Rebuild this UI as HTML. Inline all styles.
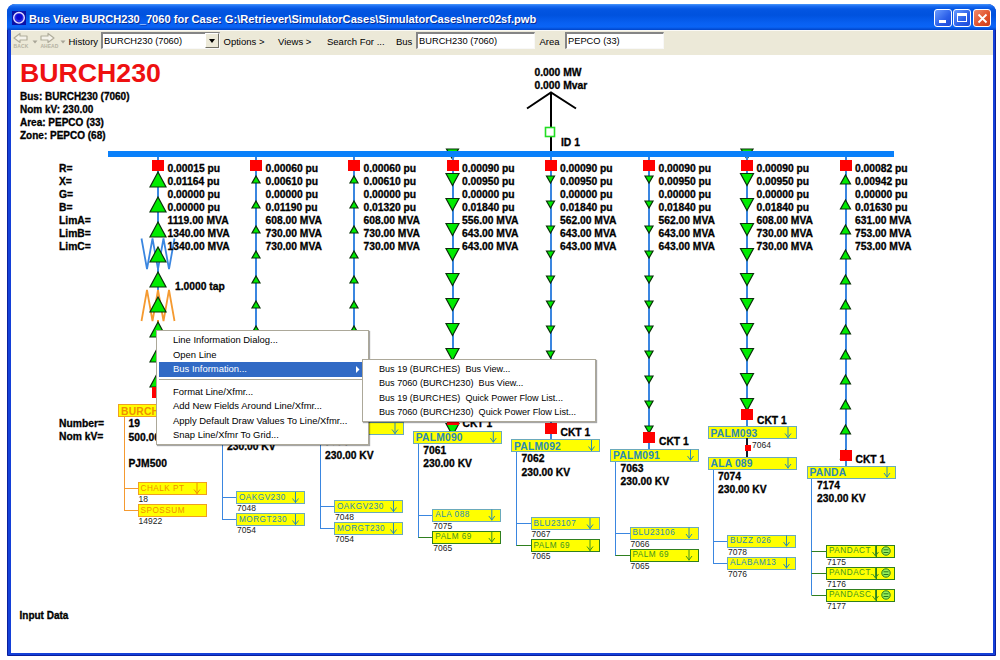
<!DOCTYPE html>
<html><head><meta charset="utf-8"><style>
html,body{margin:0;padding:0;}
body{width:1000px;height:660px;position:relative;overflow:hidden;background:#fff;font-family:'Liberation Sans', sans-serif;}
.abs{position:absolute;}
#frame{left:7px;top:4px;width:989px;height:652px;background:#1440d8;border:1px solid #0a1e9c;box-sizing:border-box;border-radius:8px 8px 0 0;}
#title{left:7px;top:4px;width:989px;height:26px;border-radius:8px 8px 0 0;
 background:linear-gradient(to bottom,#4a98fa 0px,#1a6cf2 2px,#0456e2 5px,#0052de 11px,#0860f2 19px,#0a64f6 23px,#0044c8 26px);}
#ttext{left:29px;top:13px;color:#fff;font-weight:bold;font-size:11.1px;white-space:pre;text-shadow:1px 1px 0 #0a2a90;}
#toolbar{left:11px;top:30px;width:982px;height:25px;background:#ece9d8;border-top:1px solid #fbfaf6;box-sizing:border-box;}
#content{left:11px;top:55px;width:982px;height:598px;background:#fff;}
.tb{font-size:9.5px;color:#000;white-space:pre;top:36px;}
.inp{background:#fff;border-top:2px solid #858585;border-left:2px solid #858585;border-right:1px solid #f8f8f8;border-bottom:1px solid #f8f8f8;box-sizing:border-box;font-size:9.3px;line-height:14px;padding-left:1px;white-space:pre;}
.btn{width:18px;height:18px;border-radius:3px;box-sizing:border-box;border:1px solid #fff;}
.menu{background:#fff;border:1px solid #aca899;box-shadow:1px 1px 1px rgba(0,0,0,0.35);box-sizing:border-box;}
.mi{position:absolute;left:0;font-size:9.45px;white-space:pre;color:#000;}
</style></head><body>
<div id="frame" class="abs"></div>
<div id="title" class="abs"></div>
<svg class="abs" style="left:12px;top:11px" width="14" height="14"><rect width="14" height="14" fill="#0a12a8"/><circle cx="7" cy="6.8" r="5.3" fill="#2a2ae0" stroke="#e6e0ff" stroke-width="1.4"/><circle cx="7.2" cy="6" r="3" fill="#0a0ad0"/></svg>

<div id="ttext" class="abs">Bus View BURCH230_7060 for Case: G:\Retriever\SimulatorCases\SimulatorCases\nerc02sf.pwb</div>
<div class="abs btn" style="left:934px;top:9px;background:linear-gradient(135deg,#6a9cff,#2a5ee8 60%,#1c4ad8);"><div class="abs" style="left:4px;top:10px;width:7px;height:3px;background:#fff"></div></div>
<div class="abs btn" style="left:953px;top:9px;background:linear-gradient(135deg,#6a9cff,#2a5ee8 60%,#1c4ad8);"><div class="abs" style="left:3px;top:3px;width:10px;height:9px;border:1px solid #fff;border-top-width:3px;box-sizing:border-box;"></div></div>
<div class="abs btn" style="left:973px;top:9px;background:linear-gradient(135deg,#f08a6a,#e0502a 60%,#c83c1a);">
<svg class="abs" style="left:3px;top:3px" width="11" height="11"><path d="M1.5,1.5 L9.5,9.5 M9.5,1.5 L1.5,9.5" stroke="#fff" stroke-width="1.8"/></svg></div>
<div id="toolbar" class="abs"></div>
<div id="content" class="abs"></div>
<!-- toolbar -->
<svg class="abs" style="left:10px;top:32px" width="60" height="20">
 <path d="M4,6 L10,1.5 V4 H17 V8 H10 V10.5 Z" fill="#f4f2ea" stroke="#b0ad9c" stroke-width="1.2" stroke-linejoin="round"/>
 <text x="3.5" y="15.5" font-size="5" fill="#b5b2a2" font-family="Liberation Sans" font-weight="bold" letter-spacing="0.1">BACK</text>
 <path d="M22.5,8.5 h5 l-2.5,3 z" fill="#a8a597"/>
 <path d="M44,6 L38,1.5 V4 H31 V8 H38 V10.5 Z" fill="#f4f2ea" stroke="#b0ad9c" stroke-width="1.2" stroke-linejoin="round"/>
 <text x="30.5" y="15.5" font-size="5" fill="#b5b2a2" font-family="Liberation Sans" font-weight="bold" letter-spacing="0">AHEAD</text>
 <path d="M50.5,8.5 h5 l-2.5,3 z" fill="#a8a597"/>
</svg>
<div class="abs tb" style="left:68.5px">History</div>
<div class="abs inp" style="left:101px;top:32px;width:119px;height:17px;">BURCH230 (7060)</div>
<div class="abs" style="left:205px;top:33px;width:14px;height:15px;background:#ece9d8;border-left:1px solid #fff;border-top:1px solid #fff;border-right:1px solid #716f64;border-bottom:1px solid #716f64;box-sizing:border-box;"><div class="abs" style="left:3px;top:5px;width:0;height:0;border-left:3.5px solid transparent;border-right:3.5px solid transparent;border-top:4px solid #000;"></div></div>
<div class="abs tb" style="left:223.5px">Options &gt;</div>
<div class="abs tb" style="left:278px">Views &gt;</div>
<div class="abs tb" style="left:327px">Search For ...</div>
<div class="abs tb" style="left:396px">Bus</div>
<div class="abs inp" style="left:416px;top:32px;width:119px;height:17px;">BURCH230 (7060)</div>
<div class="abs tb" style="left:539.5px">Area</div>
<div class="abs inp" style="left:565px;top:32px;width:99px;height:17px;">PEPCO (33)</div>
<!-- diagram -->
<svg class="abs" style="left:0;top:0" width="1000" height="660" font-family="Liberation Sans, sans-serif">
<line x1="551" y1="92.5" x2="551" y2="152" stroke="#000" stroke-width="2"/>
<polyline points="527,108.5 551,92.5 576,108.5" fill="none" stroke="#000" stroke-width="2"/>
<polygon points="446.5,149.0 458.5,149.0 452.5,159.0" fill="#00ec00" stroke="#0a300a" stroke-width="1.2" stroke-linejoin="miter"/>
<polygon points="741.0,149.0 753.0,149.0 747,159.0" fill="#00ec00" stroke="#0a300a" stroke-width="1.2" stroke-linejoin="miter"/>
<line x1="158" y1="157" x2="158" y2="237" stroke="#3a86e0" stroke-width="2" shape-rendering="crispEdges"/>
<line x1="158" y1="268" x2="158" y2="292" stroke="#3a86e0" stroke-width="2" shape-rendering="crispEdges"/>
<line x1="158" y1="320" x2="158" y2="387" stroke="#f59a30" stroke-width="2" shape-rendering="crispEdges"/>
<line x1="256" y1="157" x2="256" y2="413.5" stroke="#3a86e0" stroke-width="2" shape-rendering="crispEdges"/>
<line x1="354" y1="157" x2="354" y2="422.5" stroke="#3a86e0" stroke-width="2" shape-rendering="crispEdges"/>
<line x1="452.5" y1="157" x2="452.5" y2="431" stroke="#3a86e0" stroke-width="2" shape-rendering="crispEdges"/>
<line x1="550.5" y1="157" x2="550.5" y2="439.5" stroke="#3a86e0" stroke-width="2" shape-rendering="crispEdges"/>
<line x1="649" y1="157" x2="649" y2="449" stroke="#3a86e0" stroke-width="2" shape-rendering="crispEdges"/>
<line x1="747" y1="157" x2="747" y2="457" stroke="#3a86e0" stroke-width="2" shape-rendering="crispEdges"/>
<line x1="845.5" y1="157" x2="845.5" y2="466" stroke="#3a86e0" stroke-width="2" shape-rendering="crispEdges"/>
<polyline points="141.5,238.5 147,269 152.5,238.5 158,269 163.5,238.5 169,269 174.5,238.5" fill="none" stroke="#3a86e0" stroke-width="1.8"/>
<polyline points="141.5,321 147,290 152.5,321 158,290 163.5,321 169,290 174.5,321" fill="none" stroke="#f59a30" stroke-width="1.8"/>
<rect x="108" y="151" width="786" height="6" fill="#0a80fa" shape-rendering="crispEdges"/>
<rect x="152" y="160" width="12" height="11" fill="#ff0000" shape-rendering="crispEdges"/>
<rect x="250" y="160" width="12" height="11" fill="#ff0000" shape-rendering="crispEdges"/>
<rect x="348" y="160" width="12" height="11" fill="#ff0000" shape-rendering="crispEdges"/>
<rect x="447" y="160" width="12" height="11" fill="#ff0000" shape-rendering="crispEdges"/>
<rect x="545" y="160" width="12" height="11" fill="#ff0000" shape-rendering="crispEdges"/>
<rect x="643" y="160" width="12" height="11" fill="#ff0000" shape-rendering="crispEdges"/>
<rect x="741" y="160" width="12" height="11" fill="#ff0000" shape-rendering="crispEdges"/>
<rect x="840" y="160" width="12" height="11" fill="#ff0000" shape-rendering="crispEdges"/>
<polygon points="158,172.0 166.0,187.0 150.0,187.0" fill="#00ec00" stroke="#0a300a" stroke-width="1.2" stroke-linejoin="miter"/>
<polygon points="158,197.0 166.0,212.0 150.0,212.0" fill="#00ec00" stroke="#0a300a" stroke-width="1.2" stroke-linejoin="miter"/>
<polygon points="158,222.0 166.0,237.0 150.0,237.0" fill="#00ec00" stroke="#0a300a" stroke-width="1.2" stroke-linejoin="miter"/>
<polygon points="158,247.0 166.0,262.0 150.0,262.0" fill="#00ec00" stroke="#0a300a" stroke-width="1.2" stroke-linejoin="miter"/>
<polygon points="158,272.0 166.0,287.0 150.0,287.0" fill="#00ec00" stroke="#0a300a" stroke-width="1.2" stroke-linejoin="miter"/>
<polygon points="158,297.0 166.0,312.0 150.0,312.0" fill="#00ec00" stroke="#0a300a" stroke-width="1.2" stroke-linejoin="miter"/>
<polygon points="158,322.0 166.0,337.0 150.0,337.0" fill="#00ec00" stroke="#0a300a" stroke-width="1.2" stroke-linejoin="miter"/>
<polygon points="158,347.0 166.0,362.0 150.0,362.0" fill="#00ec00" stroke="#0a300a" stroke-width="1.2" stroke-linejoin="miter"/>
<polygon points="158,372.0 166.0,387.0 150.0,387.0" fill="#00ec00" stroke="#0a300a" stroke-width="1.2" stroke-linejoin="miter"/>
<polygon points="256,176.0 260.0,183.0 252.0,183.0" fill="#00ec00" stroke="#0a300a" stroke-width="1.2" stroke-linejoin="miter"/>
<polygon points="256,201.0 260.0,208.0 252.0,208.0" fill="#00ec00" stroke="#0a300a" stroke-width="1.2" stroke-linejoin="miter"/>
<polygon points="256,226.0 260.0,233.0 252.0,233.0" fill="#00ec00" stroke="#0a300a" stroke-width="1.2" stroke-linejoin="miter"/>
<polygon points="256,251.0 260.0,258.0 252.0,258.0" fill="#00ec00" stroke="#0a300a" stroke-width="1.2" stroke-linejoin="miter"/>
<polygon points="256,276.0 260.0,283.0 252.0,283.0" fill="#00ec00" stroke="#0a300a" stroke-width="1.2" stroke-linejoin="miter"/>
<polygon points="256,301.0 260.0,308.0 252.0,308.0" fill="#00ec00" stroke="#0a300a" stroke-width="1.2" stroke-linejoin="miter"/>
<polygon points="256,326.0 260.0,333.0 252.0,333.0" fill="#00ec00" stroke="#0a300a" stroke-width="1.2" stroke-linejoin="miter"/>
<polygon points="256,351.0 260.0,358.0 252.0,358.0" fill="#00ec00" stroke="#0a300a" stroke-width="1.2" stroke-linejoin="miter"/>
<polygon points="256,376.0 260.0,383.0 252.0,383.0" fill="#00ec00" stroke="#0a300a" stroke-width="1.2" stroke-linejoin="miter"/>
<polygon points="256,401.0 260.0,408.0 252.0,408.0" fill="#00ec00" stroke="#0a300a" stroke-width="1.2" stroke-linejoin="miter"/>
<polygon points="354,176.0 358.0,183.0 350.0,183.0" fill="#00ec00" stroke="#0a300a" stroke-width="1.2" stroke-linejoin="miter"/>
<polygon points="354,201.0 358.0,208.0 350.0,208.0" fill="#00ec00" stroke="#0a300a" stroke-width="1.2" stroke-linejoin="miter"/>
<polygon points="354,226.0 358.0,233.0 350.0,233.0" fill="#00ec00" stroke="#0a300a" stroke-width="1.2" stroke-linejoin="miter"/>
<polygon points="354,251.0 358.0,258.0 350.0,258.0" fill="#00ec00" stroke="#0a300a" stroke-width="1.2" stroke-linejoin="miter"/>
<polygon points="354,276.0 358.0,283.0 350.0,283.0" fill="#00ec00" stroke="#0a300a" stroke-width="1.2" stroke-linejoin="miter"/>
<polygon points="354,301.0 358.0,308.0 350.0,308.0" fill="#00ec00" stroke="#0a300a" stroke-width="1.2" stroke-linejoin="miter"/>
<polygon points="354,326.0 358.0,333.0 350.0,333.0" fill="#00ec00" stroke="#0a300a" stroke-width="1.2" stroke-linejoin="miter"/>
<polygon points="354,351.0 358.0,358.0 350.0,358.0" fill="#00ec00" stroke="#0a300a" stroke-width="1.2" stroke-linejoin="miter"/>
<polygon points="354,376.0 358.0,383.0 350.0,383.0" fill="#00ec00" stroke="#0a300a" stroke-width="1.2" stroke-linejoin="miter"/>
<polygon points="354,401.0 358.0,408.0 350.0,408.0" fill="#00ec00" stroke="#0a300a" stroke-width="1.2" stroke-linejoin="miter"/>
<polygon points="446.0,173.5 459.0,173.5 452.5,185.5" fill="#00ec00" stroke="#0a300a" stroke-width="1.2" stroke-linejoin="miter"/>
<polygon points="446.0,198.5 459.0,198.5 452.5,210.5" fill="#00ec00" stroke="#0a300a" stroke-width="1.2" stroke-linejoin="miter"/>
<polygon points="446.0,223.5 459.0,223.5 452.5,235.5" fill="#00ec00" stroke="#0a300a" stroke-width="1.2" stroke-linejoin="miter"/>
<polygon points="446.0,248.5 459.0,248.5 452.5,260.5" fill="#00ec00" stroke="#0a300a" stroke-width="1.2" stroke-linejoin="miter"/>
<polygon points="446.0,273.5 459.0,273.5 452.5,285.5" fill="#00ec00" stroke="#0a300a" stroke-width="1.2" stroke-linejoin="miter"/>
<polygon points="446.0,298.5 459.0,298.5 452.5,310.5" fill="#00ec00" stroke="#0a300a" stroke-width="1.2" stroke-linejoin="miter"/>
<polygon points="446.0,323.5 459.0,323.5 452.5,335.5" fill="#00ec00" stroke="#0a300a" stroke-width="1.2" stroke-linejoin="miter"/>
<polygon points="446.0,348.5 459.0,348.5 452.5,360.5" fill="#00ec00" stroke="#0a300a" stroke-width="1.2" stroke-linejoin="miter"/>
<polygon points="446.0,373.5 459.0,373.5 452.5,385.5" fill="#00ec00" stroke="#0a300a" stroke-width="1.2" stroke-linejoin="miter"/>
<polygon points="446.0,398.5 459.0,398.5 452.5,410.5" fill="#00ec00" stroke="#0a300a" stroke-width="1.2" stroke-linejoin="miter"/>
<polygon points="446.0,423.5 459.0,423.5 452.5,435.5" fill="#00ec00" stroke="#0a300a" stroke-width="1.2" stroke-linejoin="miter"/>
<polygon points="546.5,176.0 554.5,176.0 550.5,183.0" fill="#00ec00" stroke="#0a300a" stroke-width="1.2" stroke-linejoin="miter"/>
<polygon points="546.5,201.0 554.5,201.0 550.5,208.0" fill="#00ec00" stroke="#0a300a" stroke-width="1.2" stroke-linejoin="miter"/>
<polygon points="546.5,226.0 554.5,226.0 550.5,233.0" fill="#00ec00" stroke="#0a300a" stroke-width="1.2" stroke-linejoin="miter"/>
<polygon points="546.5,251.0 554.5,251.0 550.5,258.0" fill="#00ec00" stroke="#0a300a" stroke-width="1.2" stroke-linejoin="miter"/>
<polygon points="546.5,276.0 554.5,276.0 550.5,283.0" fill="#00ec00" stroke="#0a300a" stroke-width="1.2" stroke-linejoin="miter"/>
<polygon points="546.5,301.0 554.5,301.0 550.5,308.0" fill="#00ec00" stroke="#0a300a" stroke-width="1.2" stroke-linejoin="miter"/>
<polygon points="546.5,326.0 554.5,326.0 550.5,333.0" fill="#00ec00" stroke="#0a300a" stroke-width="1.2" stroke-linejoin="miter"/>
<polygon points="546.5,351.0 554.5,351.0 550.5,358.0" fill="#00ec00" stroke="#0a300a" stroke-width="1.2" stroke-linejoin="miter"/>
<polygon points="546.5,376.0 554.5,376.0 550.5,383.0" fill="#00ec00" stroke="#0a300a" stroke-width="1.2" stroke-linejoin="miter"/>
<polygon points="546.5,401.0 554.5,401.0 550.5,408.0" fill="#00ec00" stroke="#0a300a" stroke-width="1.2" stroke-linejoin="miter"/>
<polygon points="546.5,426.0 554.5,426.0 550.5,433.0" fill="#00ec00" stroke="#0a300a" stroke-width="1.2" stroke-linejoin="miter"/>
<polygon points="645.0,176.0 653.0,176.0 649,183.0" fill="#00ec00" stroke="#0a300a" stroke-width="1.2" stroke-linejoin="miter"/>
<polygon points="645.0,201.0 653.0,201.0 649,208.0" fill="#00ec00" stroke="#0a300a" stroke-width="1.2" stroke-linejoin="miter"/>
<polygon points="645.0,226.0 653.0,226.0 649,233.0" fill="#00ec00" stroke="#0a300a" stroke-width="1.2" stroke-linejoin="miter"/>
<polygon points="645.0,251.0 653.0,251.0 649,258.0" fill="#00ec00" stroke="#0a300a" stroke-width="1.2" stroke-linejoin="miter"/>
<polygon points="645.0,276.0 653.0,276.0 649,283.0" fill="#00ec00" stroke="#0a300a" stroke-width="1.2" stroke-linejoin="miter"/>
<polygon points="645.0,301.0 653.0,301.0 649,308.0" fill="#00ec00" stroke="#0a300a" stroke-width="1.2" stroke-linejoin="miter"/>
<polygon points="645.0,326.0 653.0,326.0 649,333.0" fill="#00ec00" stroke="#0a300a" stroke-width="1.2" stroke-linejoin="miter"/>
<polygon points="645.0,351.0 653.0,351.0 649,358.0" fill="#00ec00" stroke="#0a300a" stroke-width="1.2" stroke-linejoin="miter"/>
<polygon points="645.0,376.0 653.0,376.0 649,383.0" fill="#00ec00" stroke="#0a300a" stroke-width="1.2" stroke-linejoin="miter"/>
<polygon points="645.0,401.0 653.0,401.0 649,408.0" fill="#00ec00" stroke="#0a300a" stroke-width="1.2" stroke-linejoin="miter"/>
<polygon points="645.0,426.0 653.0,426.0 649,433.0" fill="#00ec00" stroke="#0a300a" stroke-width="1.2" stroke-linejoin="miter"/>
<polygon points="740.5,173.5 753.5,173.5 747,185.5" fill="#00ec00" stroke="#0a300a" stroke-width="1.2" stroke-linejoin="miter"/>
<polygon points="740.5,198.5 753.5,198.5 747,210.5" fill="#00ec00" stroke="#0a300a" stroke-width="1.2" stroke-linejoin="miter"/>
<polygon points="740.5,223.5 753.5,223.5 747,235.5" fill="#00ec00" stroke="#0a300a" stroke-width="1.2" stroke-linejoin="miter"/>
<polygon points="740.5,248.5 753.5,248.5 747,260.5" fill="#00ec00" stroke="#0a300a" stroke-width="1.2" stroke-linejoin="miter"/>
<polygon points="740.5,273.5 753.5,273.5 747,285.5" fill="#00ec00" stroke="#0a300a" stroke-width="1.2" stroke-linejoin="miter"/>
<polygon points="740.5,298.5 753.5,298.5 747,310.5" fill="#00ec00" stroke="#0a300a" stroke-width="1.2" stroke-linejoin="miter"/>
<polygon points="740.5,323.5 753.5,323.5 747,335.5" fill="#00ec00" stroke="#0a300a" stroke-width="1.2" stroke-linejoin="miter"/>
<polygon points="740.5,348.5 753.5,348.5 747,360.5" fill="#00ec00" stroke="#0a300a" stroke-width="1.2" stroke-linejoin="miter"/>
<polygon points="740.5,373.5 753.5,373.5 747,385.5" fill="#00ec00" stroke="#0a300a" stroke-width="1.2" stroke-linejoin="miter"/>
<polygon points="740.5,398.5 753.5,398.5 747,410.5" fill="#00ec00" stroke="#0a300a" stroke-width="1.2" stroke-linejoin="miter"/>
<polygon points="845.5,175.0 850.5,184.0 840.5,184.0" fill="#00ec00" stroke="#0a300a" stroke-width="1.2" stroke-linejoin="miter"/>
<polygon points="845.5,200.0 850.5,209.0 840.5,209.0" fill="#00ec00" stroke="#0a300a" stroke-width="1.2" stroke-linejoin="miter"/>
<polygon points="845.5,225.0 850.5,234.0 840.5,234.0" fill="#00ec00" stroke="#0a300a" stroke-width="1.2" stroke-linejoin="miter"/>
<polygon points="845.5,250.0 850.5,259.0 840.5,259.0" fill="#00ec00" stroke="#0a300a" stroke-width="1.2" stroke-linejoin="miter"/>
<polygon points="845.5,275.0 850.5,284.0 840.5,284.0" fill="#00ec00" stroke="#0a300a" stroke-width="1.2" stroke-linejoin="miter"/>
<polygon points="845.5,300.0 850.5,309.0 840.5,309.0" fill="#00ec00" stroke="#0a300a" stroke-width="1.2" stroke-linejoin="miter"/>
<polygon points="845.5,325.0 850.5,334.0 840.5,334.0" fill="#00ec00" stroke="#0a300a" stroke-width="1.2" stroke-linejoin="miter"/>
<polygon points="845.5,350.0 850.5,359.0 840.5,359.0" fill="#00ec00" stroke="#0a300a" stroke-width="1.2" stroke-linejoin="miter"/>
<polygon points="845.5,375.0 850.5,384.0 840.5,384.0" fill="#00ec00" stroke="#0a300a" stroke-width="1.2" stroke-linejoin="miter"/>
<polygon points="845.5,400.0 850.5,409.0 840.5,409.0" fill="#00ec00" stroke="#0a300a" stroke-width="1.2" stroke-linejoin="miter"/>
<polygon points="845.5,425.0 850.5,434.0 840.5,434.0" fill="#00ec00" stroke="#0a300a" stroke-width="1.2" stroke-linejoin="miter"/>
<polygon points="845.5,450.0 850.5,459.0 840.5,459.0" fill="#00ec00" stroke="#0a300a" stroke-width="1.2" stroke-linejoin="miter"/>
<rect x="152" y="387" width="12" height="11" fill="#ff0000" shape-rendering="crispEdges"/>
<rect x="250" y="396" width="12" height="11" fill="#ff0000" shape-rendering="crispEdges"/>
<rect x="348" y="405" width="12" height="11" fill="#ff0000" shape-rendering="crispEdges"/>
<rect x="447" y="414" width="12" height="11" fill="#ff0000" shape-rendering="crispEdges"/>
<rect x="545" y="423" width="12" height="11" fill="#ff0000" shape-rendering="crispEdges"/>
<rect x="643" y="432" width="12" height="11" fill="#ff0000" shape-rendering="crispEdges"/>
<rect x="741" y="409" width="12" height="11" fill="#ff0000" shape-rendering="crispEdges"/>
<rect x="840" y="450" width="12" height="11" fill="#ff0000" shape-rendering="crispEdges"/>
<text x="167.5" y="172" font-size="10.3" font-weight="bold" fill="#000" text-anchor="start" stroke="#000" stroke-width="0.3" >0.00015 pu</text>
<text x="167.5" y="185" font-size="10.3" font-weight="bold" fill="#000" text-anchor="start" stroke="#000" stroke-width="0.3" >0.01164 pu</text>
<text x="167.5" y="198" font-size="10.3" font-weight="bold" fill="#000" text-anchor="start" stroke="#000" stroke-width="0.3" >0.00000 pu</text>
<text x="167.5" y="211" font-size="10.3" font-weight="bold" fill="#000" text-anchor="start" stroke="#000" stroke-width="0.3" >0.00000 pu</text>
<text x="167.5" y="224" font-size="10.3" font-weight="bold" fill="#000" text-anchor="start" stroke="#000" stroke-width="0.3" >1119.00 MVA</text>
<text x="167.5" y="237" font-size="10.3" font-weight="bold" fill="#000" text-anchor="start" stroke="#000" stroke-width="0.3" >1340.00 MVA</text>
<text x="167.5" y="250" font-size="10.3" font-weight="bold" fill="#000" text-anchor="start" stroke="#000" stroke-width="0.3" >1340.00 MVA</text>
<text x="265.5" y="172" font-size="10.3" font-weight="bold" fill="#000" text-anchor="start" stroke="#000" stroke-width="0.3" >0.00060 pu</text>
<text x="265.5" y="185" font-size="10.3" font-weight="bold" fill="#000" text-anchor="start" stroke="#000" stroke-width="0.3" >0.00610 pu</text>
<text x="265.5" y="198" font-size="10.3" font-weight="bold" fill="#000" text-anchor="start" stroke="#000" stroke-width="0.3" >0.00000 pu</text>
<text x="265.5" y="211" font-size="10.3" font-weight="bold" fill="#000" text-anchor="start" stroke="#000" stroke-width="0.3" >0.01190 pu</text>
<text x="265.5" y="224" font-size="10.3" font-weight="bold" fill="#000" text-anchor="start" stroke="#000" stroke-width="0.3" >608.00 MVA</text>
<text x="265.5" y="237" font-size="10.3" font-weight="bold" fill="#000" text-anchor="start" stroke="#000" stroke-width="0.3" >730.00 MVA</text>
<text x="265.5" y="250" font-size="10.3" font-weight="bold" fill="#000" text-anchor="start" stroke="#000" stroke-width="0.3" >730.00 MVA</text>
<text x="363.5" y="172" font-size="10.3" font-weight="bold" fill="#000" text-anchor="start" stroke="#000" stroke-width="0.3" >0.00060 pu</text>
<text x="363.5" y="185" font-size="10.3" font-weight="bold" fill="#000" text-anchor="start" stroke="#000" stroke-width="0.3" >0.00610 pu</text>
<text x="363.5" y="198" font-size="10.3" font-weight="bold" fill="#000" text-anchor="start" stroke="#000" stroke-width="0.3" >0.00000 pu</text>
<text x="363.5" y="211" font-size="10.3" font-weight="bold" fill="#000" text-anchor="start" stroke="#000" stroke-width="0.3" >0.01320 pu</text>
<text x="363.5" y="224" font-size="10.3" font-weight="bold" fill="#000" text-anchor="start" stroke="#000" stroke-width="0.3" >608.00 MVA</text>
<text x="363.5" y="237" font-size="10.3" font-weight="bold" fill="#000" text-anchor="start" stroke="#000" stroke-width="0.3" >730.00 MVA</text>
<text x="363.5" y="250" font-size="10.3" font-weight="bold" fill="#000" text-anchor="start" stroke="#000" stroke-width="0.3" >730.00 MVA</text>
<text x="462.0" y="172" font-size="10.3" font-weight="bold" fill="#000" text-anchor="start" stroke="#000" stroke-width="0.3" >0.00090 pu</text>
<text x="462.0" y="185" font-size="10.3" font-weight="bold" fill="#000" text-anchor="start" stroke="#000" stroke-width="0.3" >0.00950 pu</text>
<text x="462.0" y="198" font-size="10.3" font-weight="bold" fill="#000" text-anchor="start" stroke="#000" stroke-width="0.3" >0.00000 pu</text>
<text x="462.0" y="211" font-size="10.3" font-weight="bold" fill="#000" text-anchor="start" stroke="#000" stroke-width="0.3" >0.01840 pu</text>
<text x="462.0" y="224" font-size="10.3" font-weight="bold" fill="#000" text-anchor="start" stroke="#000" stroke-width="0.3" >556.00 MVA</text>
<text x="462.0" y="237" font-size="10.3" font-weight="bold" fill="#000" text-anchor="start" stroke="#000" stroke-width="0.3" >643.00 MVA</text>
<text x="462.0" y="250" font-size="10.3" font-weight="bold" fill="#000" text-anchor="start" stroke="#000" stroke-width="0.3" >643.00 MVA</text>
<text x="560.0" y="172" font-size="10.3" font-weight="bold" fill="#000" text-anchor="start" stroke="#000" stroke-width="0.3" >0.00090 pu</text>
<text x="560.0" y="185" font-size="10.3" font-weight="bold" fill="#000" text-anchor="start" stroke="#000" stroke-width="0.3" >0.00950 pu</text>
<text x="560.0" y="198" font-size="10.3" font-weight="bold" fill="#000" text-anchor="start" stroke="#000" stroke-width="0.3" >0.00000 pu</text>
<text x="560.0" y="211" font-size="10.3" font-weight="bold" fill="#000" text-anchor="start" stroke="#000" stroke-width="0.3" >0.01840 pu</text>
<text x="560.0" y="224" font-size="10.3" font-weight="bold" fill="#000" text-anchor="start" stroke="#000" stroke-width="0.3" >562.00 MVA</text>
<text x="560.0" y="237" font-size="10.3" font-weight="bold" fill="#000" text-anchor="start" stroke="#000" stroke-width="0.3" >643.00 MVA</text>
<text x="560.0" y="250" font-size="10.3" font-weight="bold" fill="#000" text-anchor="start" stroke="#000" stroke-width="0.3" >643.00 MVA</text>
<text x="658.5" y="172" font-size="10.3" font-weight="bold" fill="#000" text-anchor="start" stroke="#000" stroke-width="0.3" >0.00090 pu</text>
<text x="658.5" y="185" font-size="10.3" font-weight="bold" fill="#000" text-anchor="start" stroke="#000" stroke-width="0.3" >0.00950 pu</text>
<text x="658.5" y="198" font-size="10.3" font-weight="bold" fill="#000" text-anchor="start" stroke="#000" stroke-width="0.3" >0.00000 pu</text>
<text x="658.5" y="211" font-size="10.3" font-weight="bold" fill="#000" text-anchor="start" stroke="#000" stroke-width="0.3" >0.01840 pu</text>
<text x="658.5" y="224" font-size="10.3" font-weight="bold" fill="#000" text-anchor="start" stroke="#000" stroke-width="0.3" >562.00 MVA</text>
<text x="658.5" y="237" font-size="10.3" font-weight="bold" fill="#000" text-anchor="start" stroke="#000" stroke-width="0.3" >643.00 MVA</text>
<text x="658.5" y="250" font-size="10.3" font-weight="bold" fill="#000" text-anchor="start" stroke="#000" stroke-width="0.3" >643.00 MVA</text>
<text x="756.5" y="172" font-size="10.3" font-weight="bold" fill="#000" text-anchor="start" stroke="#000" stroke-width="0.3" >0.00090 pu</text>
<text x="756.5" y="185" font-size="10.3" font-weight="bold" fill="#000" text-anchor="start" stroke="#000" stroke-width="0.3" >0.00950 pu</text>
<text x="756.5" y="198" font-size="10.3" font-weight="bold" fill="#000" text-anchor="start" stroke="#000" stroke-width="0.3" >0.00000 pu</text>
<text x="756.5" y="211" font-size="10.3" font-weight="bold" fill="#000" text-anchor="start" stroke="#000" stroke-width="0.3" >0.01840 pu</text>
<text x="756.5" y="224" font-size="10.3" font-weight="bold" fill="#000" text-anchor="start" stroke="#000" stroke-width="0.3" >608.00 MVA</text>
<text x="756.5" y="237" font-size="10.3" font-weight="bold" fill="#000" text-anchor="start" stroke="#000" stroke-width="0.3" >730.00 MVA</text>
<text x="756.5" y="250" font-size="10.3" font-weight="bold" fill="#000" text-anchor="start" stroke="#000" stroke-width="0.3" >730.00 MVA</text>
<text x="855.0" y="172" font-size="10.3" font-weight="bold" fill="#000" text-anchor="start" stroke="#000" stroke-width="0.3" >0.00082 pu</text>
<text x="855.0" y="185" font-size="10.3" font-weight="bold" fill="#000" text-anchor="start" stroke="#000" stroke-width="0.3" >0.00942 pu</text>
<text x="855.0" y="198" font-size="10.3" font-weight="bold" fill="#000" text-anchor="start" stroke="#000" stroke-width="0.3" >0.00000 pu</text>
<text x="855.0" y="211" font-size="10.3" font-weight="bold" fill="#000" text-anchor="start" stroke="#000" stroke-width="0.3" >0.01630 pu</text>
<text x="855.0" y="224" font-size="10.3" font-weight="bold" fill="#000" text-anchor="start" stroke="#000" stroke-width="0.3" >631.00 MVA</text>
<text x="855.0" y="237" font-size="10.3" font-weight="bold" fill="#000" text-anchor="start" stroke="#000" stroke-width="0.3" >753.00 MVA</text>
<text x="855.0" y="250" font-size="10.3" font-weight="bold" fill="#000" text-anchor="start" stroke="#000" stroke-width="0.3" >753.00 MVA</text>
<text x="59" y="172" font-size="10.3" font-weight="bold" fill="#000" text-anchor="start" stroke="#000" stroke-width="0.3" >R=</text>
<text x="59" y="185" font-size="10.3" font-weight="bold" fill="#000" text-anchor="start" stroke="#000" stroke-width="0.3" >X=</text>
<text x="59" y="198" font-size="10.3" font-weight="bold" fill="#000" text-anchor="start" stroke="#000" stroke-width="0.3" >G=</text>
<text x="59" y="211" font-size="10.3" font-weight="bold" fill="#000" text-anchor="start" stroke="#000" stroke-width="0.3" >B=</text>
<text x="59" y="224" font-size="10.3" font-weight="bold" fill="#000" text-anchor="start" stroke="#000" stroke-width="0.3" >LimA=</text>
<text x="59" y="237" font-size="10.3" font-weight="bold" fill="#000" text-anchor="start" stroke="#000" stroke-width="0.3" >LimB=</text>
<text x="59" y="250" font-size="10.3" font-weight="bold" fill="#000" text-anchor="start" stroke="#000" stroke-width="0.3" >LimC=</text>
<line x1="124.5" y1="416.5" x2="124.5" y2="511.0" stroke="#f59a30" stroke-width="1"/>
<line x1="124.5" y1="488.5" x2="138.0" y2="488.5" stroke="#f59a30" stroke-width="1"/>
<rect x="138.5" y="482.5" width="68" height="12" fill="#ffff00" stroke="#f0a020" stroke-width="1"/>
<text x="140.5" y="490.8" font-size="8.2" font-weight="normal" fill="#f09000" text-anchor="start" letter-spacing="0.5" >CHALK PT</text>
<path d="M197.0,483.0 V494.0 M194.0,489.5 L197.0,493.5 L200.0,489.5" fill="none" stroke="#f09000" stroke-width="1"/>
<text x="138.5" y="502.0" font-size="8.5" font-weight="normal" fill="#222" text-anchor="start" >18</text>
<line x1="124.5" y1="510.5" x2="138.0" y2="510.5" stroke="#f59a30" stroke-width="1"/>
<rect x="138.5" y="504.5" width="68" height="12" fill="#ffff00" stroke="#f0a020" stroke-width="1"/>
<text x="140.5" y="512.8" font-size="8.2" font-weight="normal" fill="#f09000" text-anchor="start" letter-spacing="0.5" >SPOSSUM</text>
<text x="138.5" y="524.0" font-size="8.5" font-weight="normal" fill="#222" text-anchor="start" >14922</text>
<rect x="118.5" y="404.5" width="88" height="12" fill="#ffff00" stroke="#f0a020" stroke-width="1"/>
<text x="121.0" y="414.5" font-size="10.3" font-weight="bold" fill="#f09000" text-anchor="start" letter-spacing="0.2" >BURCHES</text>
<path d="M198.5,405.0 V416.0 M195.5,411.5 L198.5,415.5 L201.5,411.5" fill="none" stroke="#f09000" stroke-width="1"/>
<text x="128.5" y="427.0" font-size="10.3" font-weight="bold" fill="#000" text-anchor="start" stroke="#000" stroke-width="0.3" >19</text>
<text x="128.5" y="440.5" font-size="10.3" font-weight="bold" fill="#000" text-anchor="start" stroke="#000" stroke-width="0.3" >500.00 KV</text>
<line x1="222.5" y1="425.5" x2="222.5" y2="520.0" stroke="#3a86e0" stroke-width="1"/>
<line x1="222.5" y1="497.5" x2="236.5" y2="497.5" stroke="#3a86e0" stroke-width="1"/>
<rect x="236.5" y="491.5" width="68" height="12" fill="#ffff00" stroke="#6aaabb" stroke-width="1"/>
<text x="239.0" y="499.8" font-size="8.2" font-weight="normal" fill="#2a8ab4" text-anchor="start" letter-spacing="0.5" >OAKGV230</text>
<path d="M295.5,492.0 V503.0 M292.5,498.5 L295.5,502.5 L298.5,498.5" fill="none" stroke="#2a8ab4" stroke-width="1"/>
<text x="237.0" y="511.0" font-size="8.5" font-weight="normal" fill="#222" text-anchor="start" >7048</text>
<line x1="222.5" y1="519.5" x2="236.5" y2="519.5" stroke="#3a86e0" stroke-width="1"/>
<rect x="236.5" y="513.5" width="68" height="12" fill="#ffff00" stroke="#6aaabb" stroke-width="1"/>
<text x="239.0" y="521.8" font-size="8.2" font-weight="normal" fill="#2a8ab4" text-anchor="start" letter-spacing="0.5" >MORGT230</text>
<path d="M295.5,514.0 V525.0 M292.5,520.5 L295.5,524.5 L298.5,520.5" fill="none" stroke="#2a8ab4" stroke-width="1"/>
<text x="237.0" y="533.0" font-size="8.5" font-weight="normal" fill="#222" text-anchor="start" >7054</text>
<rect x="217.5" y="413.5" width="88" height="12" fill="#ffff00" stroke="#6aaabb" stroke-width="1"/>
<text x="219.5" y="423.5" font-size="10.3" font-weight="bold" fill="#2a8ab4" text-anchor="start" letter-spacing="0.2" >BURCH2</text>
<path d="M297,414.0 V425.0 M294,420.5 L297,424.5 L300,420.5" fill="none" stroke="#2a8ab4" stroke-width="1"/>
<text x="227" y="436.0" font-size="10.3" font-weight="bold" fill="#000" text-anchor="start" stroke="#000" stroke-width="0.3" >7048</text>
<text x="227" y="449.5" font-size="10.3" font-weight="bold" fill="#000" text-anchor="start" stroke="#000" stroke-width="0.3" >230.00 KV</text>
<line x1="320.5" y1="434.5" x2="320.5" y2="529.0" stroke="#3a86e0" stroke-width="1"/>
<line x1="320.5" y1="506.5" x2="334.5" y2="506.5" stroke="#3a86e0" stroke-width="1"/>
<rect x="334.5" y="500.5" width="68" height="12" fill="#ffff00" stroke="#6aaabb" stroke-width="1"/>
<text x="337.0" y="508.8" font-size="8.2" font-weight="normal" fill="#2a8ab4" text-anchor="start" letter-spacing="0.5" >OAKGV230</text>
<path d="M393.5,501.0 V512.0 M390.5,507.5 L393.5,511.5 L396.5,507.5" fill="none" stroke="#2a8ab4" stroke-width="1"/>
<text x="335.0" y="520.0" font-size="8.5" font-weight="normal" fill="#222" text-anchor="start" >7048</text>
<line x1="320.5" y1="528.5" x2="334.5" y2="528.5" stroke="#3a86e0" stroke-width="1"/>
<rect x="334.5" y="522.5" width="68" height="12" fill="#ffff00" stroke="#6aaabb" stroke-width="1"/>
<text x="337.0" y="530.8" font-size="8.2" font-weight="normal" fill="#2a8ab4" text-anchor="start" letter-spacing="0.5" >MORGT230</text>
<path d="M393.5,523.0 V534.0 M390.5,529.5 L393.5,533.5 L396.5,529.5" fill="none" stroke="#2a8ab4" stroke-width="1"/>
<text x="335.0" y="542.0" font-size="8.5" font-weight="normal" fill="#222" text-anchor="start" >7054</text>
<rect x="315.5" y="422.5" width="88" height="12" fill="#ffff00" stroke="#6aaabb" stroke-width="1"/>
<text x="317.5" y="432.5" font-size="10.3" font-weight="bold" fill="#2a8ab4" text-anchor="start" letter-spacing="0.2" >BURCH3</text>
<path d="M395,423.0 V434.0 M392,429.5 L395,433.5 L398,429.5" fill="none" stroke="#2a8ab4" stroke-width="1"/>
<text x="325" y="445.0" font-size="10.3" font-weight="bold" fill="#000" text-anchor="start" stroke="#000" stroke-width="0.3" >7054</text>
<text x="325" y="458.5" font-size="10.3" font-weight="bold" fill="#000" text-anchor="start" stroke="#000" stroke-width="0.3" >230.00 KV</text>
<line x1="418.5" y1="443" x2="418.5" y2="538.0" stroke="#3a86e0" stroke-width="1"/>
<line x1="418.5" y1="515.5" x2="432.8" y2="515.5" stroke="#3a86e0" stroke-width="1"/>
<rect x="432.5" y="509.5" width="68" height="12" fill="#ffff00" stroke="#6aaabb" stroke-width="1"/>
<text x="435.3" y="517.3" font-size="8.2" font-weight="normal" fill="#2a8ab4" text-anchor="start" letter-spacing="0.5" >ALA 088</text>
<path d="M491.8,509.5 V520.5 M488.8,516.0 L491.8,520.0 L494.8,516.0" fill="none" stroke="#2a8ab4" stroke-width="1"/>
<text x="433.3" y="528.5" font-size="8.5" font-weight="normal" fill="#222" text-anchor="start" >7075</text>
<line x1="418.5" y1="537.5" x2="432.8" y2="537.5" stroke="#2f7f1f" stroke-width="1"/>
<rect x="432.5" y="531.5" width="68" height="12" fill="#ffff00" stroke="#2f7f1f" stroke-width="1"/>
<text x="435.3" y="539.3" font-size="8.2" font-weight="normal" fill="#3e9420" text-anchor="start" letter-spacing="0.5" >PALM 69</text>
<path d="M491.8,531.5 V542.5 M488.8,538.0 L491.8,542.0 L494.8,538.0" fill="none" stroke="#3e9420" stroke-width="1"/>
<text x="433.3" y="550.5" font-size="8.5" font-weight="normal" fill="#222" text-anchor="start" >7065</text>
<rect x="413.5" y="431.5" width="88" height="12" fill="#ffff00" stroke="#6aaabb" stroke-width="1"/>
<text x="415.8" y="441" font-size="10.3" font-weight="bold" fill="#2a8ab4" text-anchor="start" letter-spacing="0.2" >PALM090</text>
<path d="M493.3,431.5 V442.5 M490.3,438.0 L493.3,442.0 L496.3,438.0" fill="none" stroke="#2a8ab4" stroke-width="1"/>
<text x="423.3" y="453.5" font-size="10.3" font-weight="bold" fill="#000" text-anchor="start" stroke="#000" stroke-width="0.3" >7061</text>
<text x="423.3" y="467" font-size="10.3" font-weight="bold" fill="#000" text-anchor="start" stroke="#000" stroke-width="0.3" >230.00 KV</text>
<text x="462.5" y="427.3" font-size="10.3" font-weight="bold" fill="#000" text-anchor="start" stroke="#000" stroke-width="0.3" >CKT  1</text>
<line x1="516.5" y1="451.5" x2="516.5" y2="546.0" stroke="#3a86e0" stroke-width="1"/>
<line x1="516.5" y1="523.5" x2="531.0" y2="523.5" stroke="#3a86e0" stroke-width="1"/>
<rect x="531.5" y="517.5" width="68" height="12" fill="#ffff00" stroke="#6aaabb" stroke-width="1"/>
<text x="533.5" y="525.8" font-size="8.2" font-weight="normal" fill="#2a8ab4" text-anchor="start" letter-spacing="0.5" >BLU23107</text>
<path d="M590.0,518.0 V529.0 M587.0,524.5 L590.0,528.5 L593.0,524.5" fill="none" stroke="#2a8ab4" stroke-width="1"/>
<text x="531.5" y="537.0" font-size="8.5" font-weight="normal" fill="#222" text-anchor="start" >7067</text>
<line x1="516.5" y1="545.5" x2="531.0" y2="545.5" stroke="#2f7f1f" stroke-width="1"/>
<rect x="531.5" y="539.5" width="68" height="12" fill="#ffff00" stroke="#2f7f1f" stroke-width="1"/>
<text x="533.5" y="547.8" font-size="8.2" font-weight="normal" fill="#3e9420" text-anchor="start" letter-spacing="0.5" >PALM 69</text>
<path d="M590.0,540.0 V551.0 M587.0,546.5 L590.0,550.5 L593.0,546.5" fill="none" stroke="#3e9420" stroke-width="1"/>
<text x="531.5" y="559.0" font-size="8.5" font-weight="normal" fill="#222" text-anchor="start" >7065</text>
<rect x="511.5" y="439.5" width="88" height="12" fill="#ffff00" stroke="#6aaabb" stroke-width="1"/>
<text x="514.0" y="449.5" font-size="10.3" font-weight="bold" fill="#2a8ab4" text-anchor="start" letter-spacing="0.2" >PALM092</text>
<path d="M591.5,440.0 V451.0 M588.5,446.5 L591.5,450.5 L594.5,446.5" fill="none" stroke="#2a8ab4" stroke-width="1"/>
<text x="521.5" y="462.0" font-size="10.3" font-weight="bold" fill="#000" text-anchor="start" stroke="#000" stroke-width="0.3" >7062</text>
<text x="521.5" y="475.5" font-size="10.3" font-weight="bold" fill="#000" text-anchor="start" stroke="#000" stroke-width="0.3" >230.00 KV</text>
<text x="560.5" y="436.3" font-size="10.3" font-weight="bold" fill="#000" text-anchor="start" stroke="#000" stroke-width="0.3" >CKT  1</text>
<line x1="615.5" y1="461" x2="615.5" y2="556.0" stroke="#3a86e0" stroke-width="1"/>
<line x1="615.5" y1="533.5" x2="630.0" y2="533.5" stroke="#3a86e0" stroke-width="1"/>
<rect x="630.5" y="527.5" width="68" height="12" fill="#ffff00" stroke="#6aaabb" stroke-width="1"/>
<text x="632.5" y="535.3" font-size="8.2" font-weight="normal" fill="#2a8ab4" text-anchor="start" letter-spacing="0.5" >BLU23106</text>
<path d="M689.0,527.5 V538.5 M686.0,534.0 L689.0,538.0 L692.0,534.0" fill="none" stroke="#2a8ab4" stroke-width="1"/>
<text x="630.5" y="546.5" font-size="8.5" font-weight="normal" fill="#222" text-anchor="start" >7066</text>
<line x1="615.5" y1="555.5" x2="630.0" y2="555.5" stroke="#2f7f1f" stroke-width="1"/>
<rect x="630.5" y="549.5" width="68" height="12" fill="#ffff00" stroke="#2f7f1f" stroke-width="1"/>
<text x="632.5" y="557.3" font-size="8.2" font-weight="normal" fill="#3e9420" text-anchor="start" letter-spacing="0.5" >PALM 69</text>
<path d="M689.0,549.5 V560.5 M686.0,556.0 L689.0,560.0 L692.0,556.0" fill="none" stroke="#3e9420" stroke-width="1"/>
<text x="630.5" y="568.5" font-size="8.5" font-weight="normal" fill="#222" text-anchor="start" >7065</text>
<rect x="610.5" y="449.5" width="88" height="12" fill="#ffff00" stroke="#6aaabb" stroke-width="1"/>
<text x="613.0" y="459" font-size="10.3" font-weight="bold" fill="#2a8ab4" text-anchor="start" letter-spacing="0.2" >PALM091</text>
<path d="M690.5,449.5 V460.5 M687.5,456.0 L690.5,460.0 L693.5,456.0" fill="none" stroke="#2a8ab4" stroke-width="1"/>
<text x="620.5" y="471.5" font-size="10.3" font-weight="bold" fill="#000" text-anchor="start" stroke="#000" stroke-width="0.3" >7063</text>
<text x="620.5" y="485" font-size="10.3" font-weight="bold" fill="#000" text-anchor="start" stroke="#000" stroke-width="0.3" >230.00 KV</text>
<text x="659" y="445.3" font-size="10.3" font-weight="bold" fill="#000" text-anchor="start" stroke="#000" stroke-width="0.3" >CKT  1</text>
<line x1="713.5" y1="469" x2="713.5" y2="564.0" stroke="#3a86e0" stroke-width="1"/>
<line x1="713.5" y1="541.5" x2="727.5" y2="541.5" stroke="#3a86e0" stroke-width="1"/>
<rect x="727.5" y="535.5" width="68" height="12" fill="#ffff00" stroke="#6aaabb" stroke-width="1"/>
<text x="730.0" y="543.3" font-size="8.2" font-weight="normal" fill="#2a8ab4" text-anchor="start" letter-spacing="0.5" >BUZZ 026</text>
<path d="M786.5,535.5 V546.5 M783.5,542.0 L786.5,546.0 L789.5,542.0" fill="none" stroke="#2a8ab4" stroke-width="1"/>
<text x="728.0" y="554.5" font-size="8.5" font-weight="normal" fill="#222" text-anchor="start" >7078</text>
<line x1="713.5" y1="563.5" x2="727.5" y2="563.5" stroke="#3a86e0" stroke-width="1"/>
<rect x="727.5" y="557.5" width="68" height="12" fill="#ffff00" stroke="#6aaabb" stroke-width="1"/>
<text x="730.0" y="565.3" font-size="8.2" font-weight="normal" fill="#2a8ab4" text-anchor="start" letter-spacing="0.5" >ALABAM13</text>
<path d="M786.5,557.5 V568.5 M783.5,564.0 L786.5,568.0 L789.5,564.0" fill="none" stroke="#2a8ab4" stroke-width="1"/>
<text x="728.0" y="576.5" font-size="8.5" font-weight="normal" fill="#222" text-anchor="start" >7076</text>
<rect x="708.5" y="426.5" width="88" height="12" fill="#ffff00" stroke="#6aaabb" stroke-width="1"/>
<text x="710.5" y="436.5" font-size="10.3" font-weight="bold" fill="#2a8ab4" text-anchor="start" letter-spacing="0.2" >PALM093</text>
<path d="M788,427.0 V438.0 M785,433.5 L788,437.5 L791,433.5" fill="none" stroke="#2a8ab4" stroke-width="1"/>
<line x1="747" y1="438" x2="747" y2="457" stroke="#000" stroke-width="1.6"/>
<rect x="744.5" y="445" width="6" height="6" fill="#ff0000" shape-rendering="crispEdges"/>
<text x="752" y="448" font-size="8.5" font-weight="normal" fill="#222" text-anchor="start" >7064</text>
<text x="757" y="423.5" font-size="10.3" font-weight="bold" fill="#000" text-anchor="start" stroke="#000" stroke-width="0.3" >CKT  1</text>
<rect x="708.5" y="457.5" width="88" height="12" fill="#ffff00" stroke="#6aaabb" stroke-width="1"/>
<text x="710.5" y="467" font-size="10.3" font-weight="bold" fill="#2a8ab4" text-anchor="start" letter-spacing="0.2" >ALA 089</text>
<path d="M788,457.5 V468.5 M785,464.0 L788,468.0 L791,464.0" fill="none" stroke="#2a8ab4" stroke-width="1"/>
<text x="718" y="479.5" font-size="10.3" font-weight="bold" fill="#000" text-anchor="start" stroke="#000" stroke-width="0.3" >7074</text>
<text x="718" y="493" font-size="10.3" font-weight="bold" fill="#000" text-anchor="start" stroke="#000" stroke-width="0.3" >230.00 KV</text>
<line x1="811.5" y1="478" x2="811.5" y2="595.0" stroke="#3a86e0" stroke-width="1"/>
<line x1="811.5" y1="551.5" x2="826.5" y2="551.5" stroke="#2f7f1f" stroke-width="1"/>
<rect x="826.5" y="545.5" width="68" height="12" fill="#ffff00" stroke="#2f7f1f" stroke-width="1"/>
<text x="829.0" y="553.3" font-size="8.2" font-weight="normal" fill="#3e9420" text-anchor="start" letter-spacing="0.5" >PANDACT</text>
<line x1="876.5" y1="545" x2="876.5" y2="557" stroke="#2f7f1f" stroke-width="1"/>
<path d="M875.5,545.5 V556.5 M872.5,552.0 L875.5,556.0 L878.5,552.0" fill="none" stroke="#3e9420" stroke-width="1"/>
<circle cx="886.0" cy="551" r="4.2" fill="#98f058" stroke="#2a7a1a" stroke-width="1"/>
<path d="M883.5,549.8 h5 M883.5,552.5 h5" stroke="#2a7a1a" stroke-width="1"/>
<text x="827.0" y="564.5" font-size="8.5" font-weight="normal" fill="#222" text-anchor="start" >7175</text>
<line x1="811.5" y1="573.5" x2="826.5" y2="573.5" stroke="#2f7f1f" stroke-width="1"/>
<rect x="826.5" y="567.5" width="68" height="12" fill="#ffff00" stroke="#2f7f1f" stroke-width="1"/>
<text x="829.0" y="575.3" font-size="8.2" font-weight="normal" fill="#3e9420" text-anchor="start" letter-spacing="0.5" >PANDACT.</text>
<line x1="876.5" y1="567" x2="876.5" y2="579" stroke="#2f7f1f" stroke-width="1"/>
<path d="M875.5,567.5 V578.5 M872.5,574.0 L875.5,578.0 L878.5,574.0" fill="none" stroke="#3e9420" stroke-width="1"/>
<circle cx="886.0" cy="573" r="4.2" fill="#98f058" stroke="#2a7a1a" stroke-width="1"/>
<path d="M883.5,571.8 h5 M883.5,574.5 h5" stroke="#2a7a1a" stroke-width="1"/>
<text x="827.0" y="586.5" font-size="8.5" font-weight="normal" fill="#222" text-anchor="start" >7176</text>
<line x1="811.5" y1="595.5" x2="826.5" y2="595.5" stroke="#2f7f1f" stroke-width="1"/>
<rect x="826.5" y="589.5" width="68" height="12" fill="#ffff00" stroke="#2f7f1f" stroke-width="1"/>
<text x="829.0" y="597.3" font-size="8.2" font-weight="normal" fill="#3e9420" text-anchor="start" letter-spacing="0.5" >PANDASC</text>
<line x1="876.5" y1="589" x2="876.5" y2="601" stroke="#2f7f1f" stroke-width="1"/>
<path d="M875.5,589.5 V600.5 M872.5,596.0 L875.5,600.0 L878.5,596.0" fill="none" stroke="#3e9420" stroke-width="1"/>
<circle cx="886.0" cy="595" r="4.2" fill="#98f058" stroke="#2a7a1a" stroke-width="1"/>
<path d="M883.5,593.8 h5 M883.5,596.5 h5" stroke="#2a7a1a" stroke-width="1"/>
<text x="827.0" y="608.5" font-size="8.5" font-weight="normal" fill="#222" text-anchor="start" >7177</text>
<rect x="807.5" y="466.5" width="88" height="12" fill="#ffff00" stroke="#6aaabb" stroke-width="1"/>
<text x="809.5" y="476" font-size="10.3" font-weight="bold" fill="#2a8ab4" text-anchor="start" letter-spacing="0.2" >PANDA</text>
<path d="M887,466.5 V477.5 M884,473.0 L887,477.0 L890,473.0" fill="none" stroke="#2a8ab4" stroke-width="1"/>
<text x="817" y="488.5" font-size="10.3" font-weight="bold" fill="#000" text-anchor="start" stroke="#000" stroke-width="0.3" >7174</text>
<text x="817" y="502" font-size="10.3" font-weight="bold" fill="#000" text-anchor="start" stroke="#000" stroke-width="0.3" >230.00 KV</text>
<text x="855.5" y="463.3" font-size="10.3" font-weight="bold" fill="#000" text-anchor="start" stroke="#000" stroke-width="0.3" >CKT  1</text>
<text x="128.5" y="467" font-size="10.3" font-weight="bold" fill="#000" text-anchor="start" stroke="#000" stroke-width="0.3" >PJM500</text>
<text x="59" y="427" font-size="10.3" font-weight="bold" fill="#000" text-anchor="start" stroke="#000" stroke-width="0.3" >Number=</text>
<text x="59" y="440" font-size="10.3" font-weight="bold" fill="#000" text-anchor="start" stroke="#000" stroke-width="0.3" >Nom kV=</text>
<text x="534.5" y="75.8" font-size="10.3" font-weight="bold" fill="#000" text-anchor="start" stroke="#000" stroke-width="0.3" >0.000 MW</text>
<text x="534.5" y="88.8" font-size="10.3" font-weight="bold" fill="#000" text-anchor="start" stroke="#000" stroke-width="0.3" >0.000 Mvar</text>
<rect x="545.5" y="127.5" width="9" height="9" fill="#fff" stroke="#22dd22" stroke-width="1.6"/>
<text x="561" y="146" font-size="10.3" font-weight="bold" fill="#000" text-anchor="start" stroke="#000" stroke-width="0.3" >ID 1</text>
<text x="175" y="289.5" font-size="10.3" font-weight="bold" fill="#000" text-anchor="start" stroke="#000" stroke-width="0.3" >1.0000 tap</text>
<text x="20" y="82" font-size="26.7" font-weight="bold" fill="#ee1111" text-anchor="start" >BURCH230</text>
<text x="20" y="100" font-size="10" font-weight="bold" fill="#000" text-anchor="start" stroke="#000" stroke-width="0.3" >Bus: BURCH230 (7060)</text>
<text x="20" y="113" font-size="10" font-weight="bold" fill="#000" text-anchor="start" stroke="#000" stroke-width="0.3" >Nom kV: 230.00</text>
<text x="20" y="126" font-size="10" font-weight="bold" fill="#000" text-anchor="start" stroke="#000" stroke-width="0.3" >Area: PEPCO (33)</text>
<text x="20" y="139" font-size="10" font-weight="bold" fill="#000" text-anchor="start" stroke="#000" stroke-width="0.3" >Zone: PEPCO (68)</text>
<text x="19.5" y="618.5" font-size="10" font-weight="bold" fill="#000" text-anchor="start" stroke="#000" stroke-width="0.3" >Input Data</text>
</svg>
<!-- context menu -->
<div class="abs menu" style="left:156px;top:330px;width:213px;height:115px;">
 <div class="mi" style="left:16px;top:3px;">Line Information Dialog...</div>
 <div class="mi" style="left:16px;top:18px;">Open Line</div>
 <div class="abs" style="left:2px;top:31px;width:205px;height:15px;background:#316ac5;"></div>
 <div class="mi" style="left:16px;top:32px;color:#fff">Bus Information...</div>
 <svg class="abs" style="left:198px;top:34px" width="6" height="9"><path d="M1,1 L4.5,4.5 L1,8 Z" fill="#fff"/></svg>
 <div class="abs" style="left:2px;top:48px;width:205px;height:1px;background:#aca899;"></div>
 <div class="mi" style="left:16px;top:55px;">Format Line/Xfmr...</div>
 <div class="mi" style="left:16px;top:69px;">Add New Fields Around Line/Xfmr...</div>
 <div class="mi" style="left:16px;top:84px;">Apply Default Draw Values To Line/Xfmr...</div>
 <div class="mi" style="left:16px;top:98px;">Snap Line/Xfmr To Grid...</div>
</div>
<div class="abs menu" style="left:362px;top:359px;width:234px;height:63px;font-size:9.1px;">
 <div class="mi" style="left:16px;top:4px;font-size:9.1px">Bus 19 (BURCHES)  Bus View...</div>
 <div class="mi" style="left:16px;top:18px;font-size:9.1px">Bus 7060 (BURCH230)  Bus View...</div>
 <div class="mi" style="left:16px;top:33px;font-size:9.1px">Bus 19 (BURCHES)  Quick Power Flow List...</div>
 <div class="mi" style="left:16px;top:47px;font-size:9.1px">Bus 7060 (BURCH230)  Quick Power Flow List...</div>
</div>
</body></html>
